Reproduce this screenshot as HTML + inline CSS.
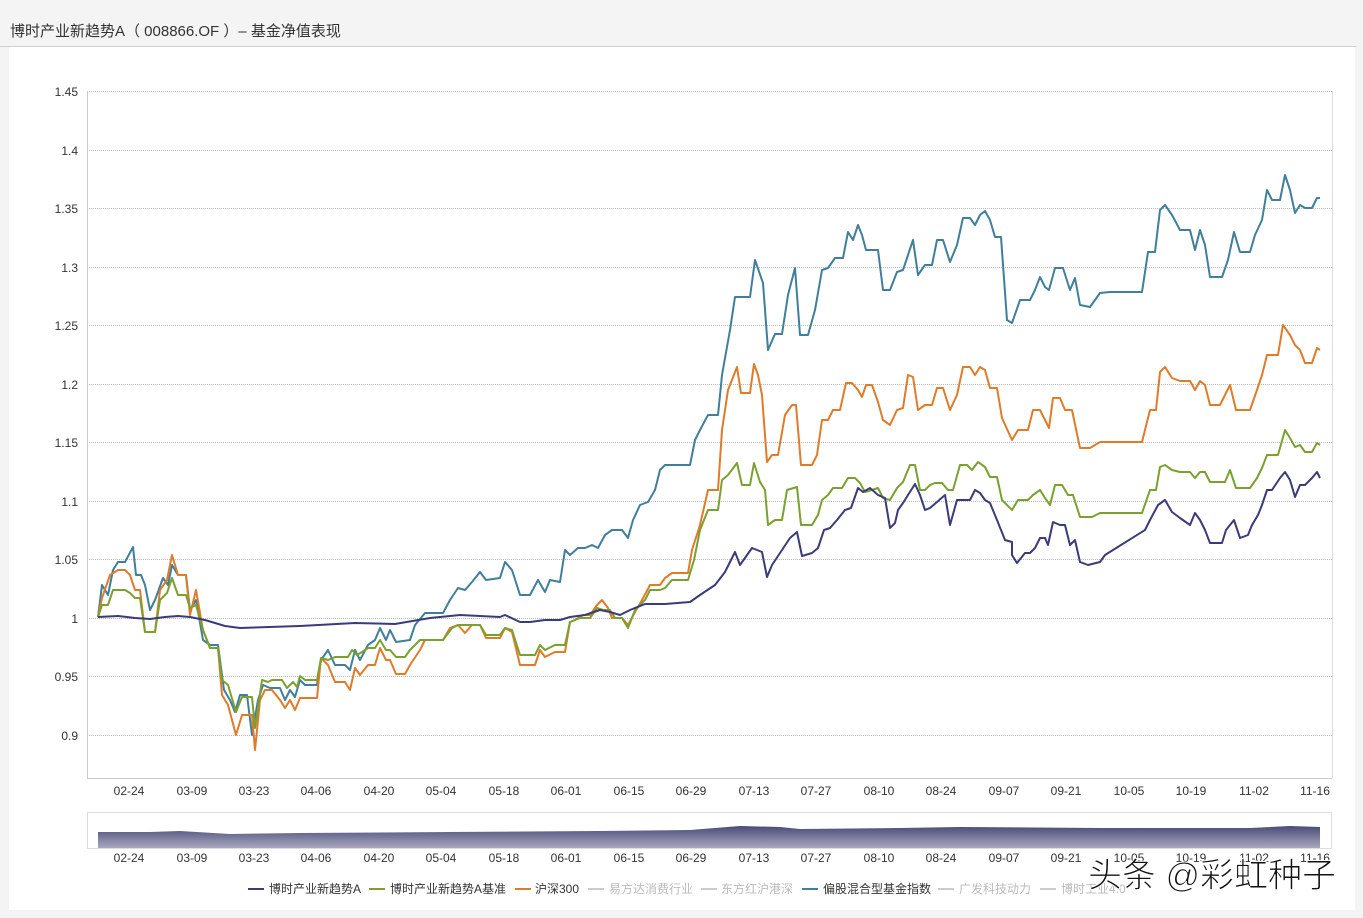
<!DOCTYPE html>
<html><head><meta charset="utf-8"><style>
html,body{margin:0;padding:0;width:1363px;height:918px;background:#f4f4f4;overflow:hidden;font-family:"Liberation Sans","Noto Sans CJK SC",sans-serif}
.t{position:absolute;left:10px;top:20px;font-size:15px;color:#333}
.hl{position:absolute;left:0;top:46px;width:1356px;height:1px;background:#d0d0d0}
.p{position:absolute;left:9px;top:47px;width:1346px;height:863px;background:#fff}
svg{position:absolute;left:0;top:0}
</style></head><body>
<div class="t">博时产业新趋势A（ 008866.OF ）– 基金净值表现</div>
<div class="hl"></div>
<div class="p"></div>
<svg width="1363" height="918" font-family="Liberation Sans, Noto Sans CJK SC, sans-serif">
<defs><linearGradient id="g" x1="0" y1="0" x2="0" y2="1"><stop offset="0" stop-color="#4a4a78"/><stop offset="1" stop-color="#a8a8c0"/></linearGradient></defs>
<g stroke="#bbb" stroke-dasharray="1,1" stroke-width="1">
<line x1="87" y1="91.5" x2="1332" y2="91.5"/><line x1="87" y1="150.5" x2="1332" y2="150.5"/><line x1="87" y1="208.5" x2="1332" y2="208.5"/><line x1="87" y1="267.5" x2="1332" y2="267.5"/><line x1="87" y1="325.5" x2="1332" y2="325.5"/><line x1="87" y1="384.5" x2="1332" y2="384.5"/><line x1="87" y1="442.5" x2="1332" y2="442.5"/><line x1="87" y1="501.5" x2="1332" y2="501.5"/><line x1="87" y1="559.5" x2="1332" y2="559.5"/><line x1="87" y1="618.5" x2="1332" y2="618.5"/><line x1="87" y1="676.5" x2="1332" y2="676.5"/><line x1="87" y1="735.5" x2="1332" y2="735.5"/>
</g>
<line x1="87.5" y1="91" x2="87.5" y2="778" stroke="#ccc"/>
<line x1="87" y1="778.5" x2="1332" y2="778.5" stroke="#ccc"/>
<line x1="1332.5" y1="91" x2="1332.5" y2="778" stroke="#ddd"/>
<g font-size="12" fill="#333" text-anchor="end">
<text x="78" y="96">1.45</text><text x="78" y="155">1.4</text><text x="78" y="213">1.35</text><text x="78" y="272">1.3</text><text x="78" y="330">1.25</text><text x="78" y="389">1.2</text><text x="78" y="447">1.15</text><text x="78" y="506">1.1</text><text x="78" y="564">1.05</text><text x="78" y="623">1</text><text x="78" y="681">0.95</text><text x="78" y="740">0.9</text>
</g>
<g font-size="12" fill="#333" text-anchor="middle">
<text x="129" y="795">02-24</text><text x="192" y="795">03-09</text><text x="254" y="795">03-23</text><text x="316" y="795">04-06</text><text x="379" y="795">04-20</text><text x="441" y="795">05-04</text><text x="504" y="795">05-18</text><text x="566" y="795">06-01</text><text x="629" y="795">06-15</text><text x="691" y="795">06-29</text><text x="754" y="795">07-13</text><text x="816" y="795">07-27</text><text x="879" y="795">08-10</text><text x="941" y="795">08-24</text><text x="1004" y="795">09-07</text><text x="1066" y="795">09-21</text><text x="1129" y="795">10-05</text><text x="1191" y="795">10-19</text><text x="1254" y="795">11-02</text><text x="1315" y="795">11-16</text>
</g>
<g font-size="12" fill="#333" text-anchor="middle">
<text x="129" y="862">02-24</text><text x="192" y="862">03-09</text><text x="254" y="862">03-23</text><text x="316" y="862">04-06</text><text x="379" y="862">04-20</text><text x="441" y="862">05-04</text><text x="504" y="862">05-18</text><text x="566" y="862">06-01</text><text x="629" y="862">06-15</text><text x="691" y="862">06-29</text><text x="754" y="862">07-13</text><text x="816" y="862">07-27</text><text x="879" y="862">08-10</text><text x="941" y="862">08-24</text><text x="1004" y="862">09-07</text><text x="1066" y="862">09-21</text><text x="1129" y="862">10-05</text><text x="1191" y="862">10-19</text><text x="1254" y="862">11-02</text><text x="1315" y="862">11-16</text>
</g>
<rect x="87.5" y="812.5" width="1244" height="36" fill="none" stroke="#ddd"/>
<path d="M98,832 L150,832 L180,831 L230,834 L300,833 L450,832 L600,831 L690,830 L740,826 L780,827 L800,829 L900,828 L960,827 L1100,828 L1150,828 L1250,828 L1290,826 L1320,827 L1320,848 L98,848 Z" fill="url(#g)"/>
<g fill="none" stroke-width="2" stroke-linejoin="round">
<polyline stroke="#3f7f9c" points="98,617 102,585 108,595 113,570 118,562 125,562 133,547 136,575 141,575 145,585 150,610 155,600 163,578 168,585 172,565 178,575 186,575 190,610 196,600 203,640 210,645 218,645 224,690 230,700 235,712 240,695 247,695 252,735 258,700 263,685 270,688 280,688 285,700 290,690 295,697 300,680 305,685 317,685 321,660 328,650 335,665 345,665 350,670 355,650 360,660 368,645 375,640 380,628 386,640 390,630 396,642 410,640 415,625 425,613 443,613 450,600 458,588 465,590 472,582 480,572 486,580 500,578 505,562 512,570 520,595 530,595 538,580 545,592 550,580 560,582 565,550 570,555 578,548 585,548 592,545 598,548 605,535 612,530 622,530 628,538 633,520 640,505 648,502 655,490 660,470 665,465 678,465 690,465 695,440 700,430 708,415 718,415 722,375 730,330 735,297 750,297 755,260 763,283 768,350 775,334 782,334 788,295 795,268 800,335 808,335 815,310 822,270 828,268 835,258 843,258 848,232 853,240 858,225 862,235 866,250 878,250 883,290 890,290 897,272 903,270 908,255 913,240 918,275 925,265 932,265 937,240 943,240 950,262 957,245 963,218 970,218 975,225 980,215 985,211 990,220 995,237 1001,237 1007,320 1012,323 1020,300 1030,300 1035,290 1040,277 1045,287 1049,290 1055,268 1063,268 1070,290 1075,278 1080,305 1090,307 1100,293 1110,292 1142,292 1148,252 1155,252 1160,210 1165,205 1172,215 1180,230 1190,230 1195,250 1200,230 1205,245 1210,277 1222,277 1228,260 1234,232 1240,252 1250,252 1255,235 1262,220 1267,190 1272,200 1280,200 1285,175 1290,190 1295,213 1300,205 1305,208 1312,208 1317,198 1320,198"/>
<polyline stroke="#e07b2a" points="98,617 102,598 110,575 118,570 125,570 130,575 135,590 140,590 145,632 155,632 160,590 167,580 172,555 178,575 186,575 190,615 196,590 203,630 210,648 218,648 222,695 228,705 236,735 242,715 252,715 255,750 260,700 265,690 272,690 280,700 285,708 290,700 295,710 300,698 305,698 317,698 321,658 328,665 335,682 345,682 350,690 355,668 360,675 368,665 375,665 380,648 386,660 390,660 396,674 405,674 410,665 420,650 425,640 443,640 450,628 458,625 465,633 472,625 480,625 486,638 500,638 505,628 512,632 520,665 535,665 540,650 545,657 555,652 565,652 570,622 575,620 583,615 590,615 597,605 602,600 608,608 612,618 622,618 628,625 635,612 642,600 650,585 660,585 665,578 672,573 688,573 692,550 700,525 708,490 718,490 722,430 728,390 737,367 741,393 750,393 754,364 758,375 762,395 767,462 772,455 778,455 785,415 792,405 796,405 801,465 812,465 817,455 822,420 828,420 833,410 840,410 846,383 852,383 858,390 862,397 866,385 872,385 878,402 883,420 890,425 897,410 903,408 908,375 913,377 918,410 925,405 932,405 937,388 943,388 950,410 957,395 963,367 970,367 975,375 980,367 985,370 990,388 997,388 1002,418 1012,440 1018,430 1028,430 1033,410 1040,410 1045,420 1049,428 1053,398 1060,398 1065,410 1072,410 1080,448 1090,448 1100,442 1142,442 1150,410 1156,410 1160,372 1165,367 1172,378 1180,381 1190,381 1195,390 1200,381 1205,385 1210,405 1220,405 1225,395 1230,385 1236,410 1250,410 1257,390 1262,375 1267,355 1278,355 1283,325 1290,335 1295,345 1300,350 1305,363 1312,363 1317,348 1320,350"/>
<polyline stroke="#7aa12f" points="98,617 102,605 108,605 113,590 125,590 130,593 135,598 140,598 145,632 155,632 160,600 167,593 172,578 178,595 186,595 190,608 196,605 203,630 210,648 218,648 222,680 228,685 236,712 242,697 252,697 255,728 262,680 268,682 272,680 282,680 287,688 293,682 297,687 300,676 305,680 317,680 321,658 328,660 335,657 348,657 352,650 357,655 362,652 368,648 375,648 380,640 386,650 390,650 396,657 405,657 410,650 420,640 443,640 452,628 458,625 465,625 480,625 486,635 500,635 505,628 512,630 520,655 535,655 540,645 545,650 555,645 565,645 570,622 580,618 590,618 597,608 603,610 610,610 615,618 622,618 628,628 635,610 645,600 650,590 660,590 665,588 672,580 688,580 694,560 700,530 708,510 718,510 722,480 728,475 737,463 742,485 750,485 754,463 760,482 765,490 768,525 775,520 782,520 787,490 797,487 801,525 812,525 818,515 822,500 828,495 833,488 842,488 848,478 855,478 860,483 865,492 872,490 878,488 883,498 890,500 897,488 903,482 910,465 915,465 920,490 925,490 930,485 935,483 942,483 948,490 953,490 960,465 967,465 972,470 978,462 985,467 990,477 997,477 1002,500 1012,510 1018,500 1028,500 1033,495 1040,490 1045,498 1050,505 1055,485 1062,485 1068,495 1073,495 1080,517 1092,517 1100,513 1142,513 1150,490 1156,490 1160,467 1165,465 1172,470 1180,472 1190,472 1195,478 1200,472 1205,472 1210,482 1225,482 1230,470 1236,488 1250,488 1257,478 1262,468 1267,455 1278,455 1285,430 1290,438 1295,447 1300,445 1305,452 1312,452 1317,443 1320,445"/>
<polyline stroke="#3b3a7a" points="98,617 118,616 135,618 150,619 165,617 178,616 190,617 205,620 225,626 240,628 300,626 355,623 395,624 430,618 460,615 500,617 505,615 520,622 530,622 545,620 560,620 570,617 585,615 600,610 610,612 620,615 630,610 645,604 665,604 690,602 700,595 715,585 725,572 735,552 740,565 752,548 762,552 767,577 772,565 782,550 790,538 797,532 802,556 812,553 818,548 824,530 830,528 837,520 845,510 851,508 858,488 863,492 870,488 878,495 885,498 890,528 895,523 898,510 903,503 908,495 915,484 920,495 925,510 930,508 937,502 945,495 950,525 957,500 963,500 970,500 975,490 980,493 985,500 990,503 997,520 1005,540 1012,542 1012,555 1017,563 1025,553 1030,553 1035,548 1040,538 1045,538 1048,545 1053,522 1060,525 1065,525 1070,545 1075,540 1080,562 1088,565 1100,562 1105,555 1145,530 1150,520 1158,505 1165,500 1172,512 1180,518 1190,525 1195,513 1200,520 1205,530 1210,543 1222,543 1226,530 1234,520 1240,538 1248,535 1252,525 1258,515 1262,505 1267,490 1272,490 1280,478 1285,472 1290,480 1295,497 1300,485 1305,485 1312,478 1317,472 1320,478"/>
</g>
<g font-size="12">
<line x1="248" y1="889" x2="264" y2="889" stroke="#3b3a7a" stroke-width="2"/><text x="269" y="893" fill="#333">博时产业新趋势A</text>
<line x1="369" y1="889" x2="385" y2="889" stroke="#7aa12f" stroke-width="2"/><text x="390" y="893" fill="#333">博时产业新趋势A基准</text>
<line x1="515" y1="889" x2="531" y2="889" stroke="#e07b2a" stroke-width="2"/><text x="535" y="893" fill="#333">沪深300</text>
<line x1="588" y1="889" x2="604" y2="889" stroke="#ccc" stroke-width="2"/><text x="609" y="893" fill="#bbb">易方达消费行业</text>
<line x1="701" y1="889" x2="717" y2="889" stroke="#ccc" stroke-width="2"/><text x="721" y="893" fill="#bbb">东方红沪港深</text>
<line x1="802" y1="889" x2="818" y2="889" stroke="#3f7f9c" stroke-width="2"/><text x="823" y="893" fill="#333">偏股混合型基金指数</text>
<line x1="938" y1="889" x2="954" y2="889" stroke="#ccc" stroke-width="2"/><text x="959" y="893" fill="#bbb">广发科技动力</text>
<line x1="1040" y1="889" x2="1056" y2="889" stroke="#ccc" stroke-width="2"/><text x="1061" y="893" fill="#bbb">博时工业4.0</text>
</g>
<text x="1088" y="887" font-size="34" fill="#111" stroke="#fff" stroke-width="1">头条 @彩虹种子</text>
</svg>
</body></html>
